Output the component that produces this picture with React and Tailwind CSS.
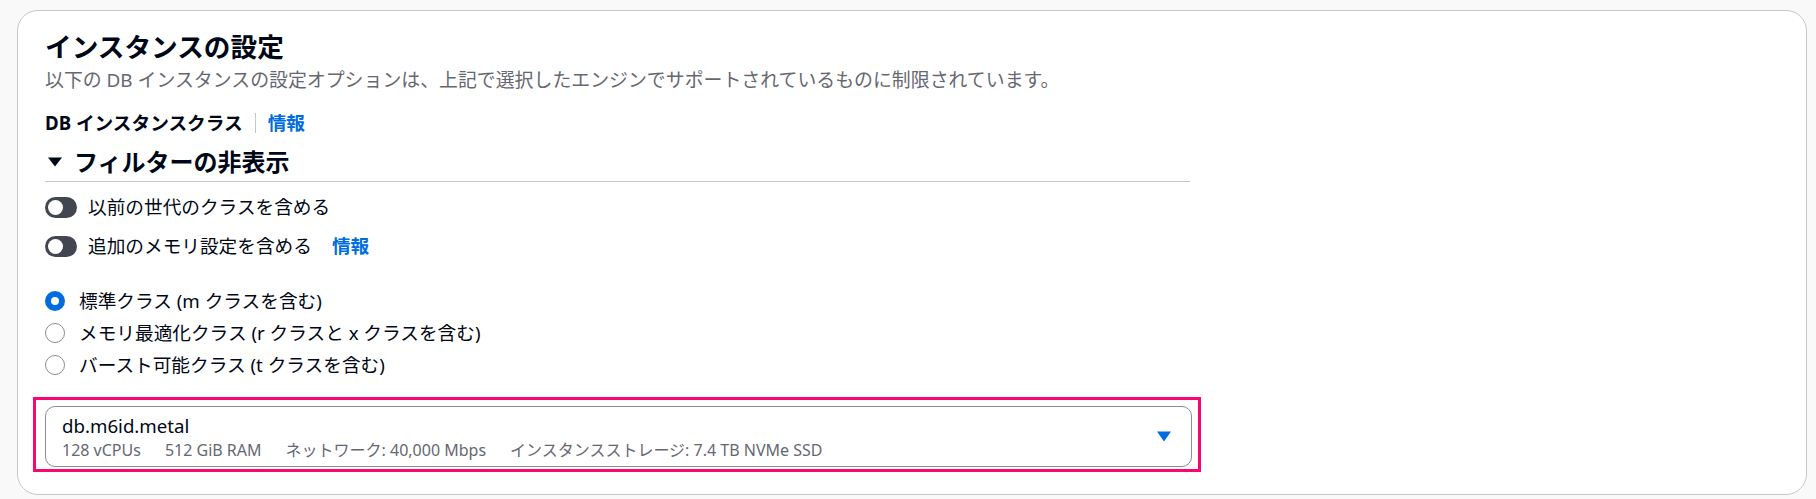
export default function App() {
  const Toggle = () => (
    <div className="w-[32px] h-[21px] rounded-full bg-[#424650] flex items-center px-[3px] shrink-0">
      <div className="w-[15px] h-[15px] rounded-full bg-white" />
    </div>
  );
  const Radio = ({ checked }) =>
    checked ? (
      <div className="w-[20px] h-[20px] rounded-full bg-[#006ce0] flex items-center justify-center shrink-0">
        <div className="w-[8px] h-[8px] rounded-full bg-white" />
      </div>
    ) : (
      <div className="w-[20px] h-[20px] rounded-full border-[1.5px] border-[#8c8c94] bg-white shrink-0" />
    );

  return (
    <div className="w-[1816px] h-[499px] bg-[#f9f9f9] pt-[10px] pl-[17px] font-['Noto_Sans','Noto_Sans_CJK_JP',sans-serif] text-[#000716]">
      <div className="w-[1790px] h-[485px] bg-white border border-[#c6c6cd] rounded-[21px] pl-[27px] pt-[20px]">
        <div className="w-[1147px]">
          <h2 className="text-[26.67px] leading-[32px] h-[32px] font-bold">インスタンスの設定</h2>
          <p className="mt-[4px] text-[18.9px] leading-[26px] text-[#656871]">
            以下の DB インスタンスの設定オプションは、上記で選択したエンジンでサポートされているものに制限されています。
          </p>
          <div className="mt-[17px] h-[26px] flex items-center text-[18.67px]">
            <span className="font-bold">DB インスタンスクラス</span>
            <span className="mx-[12px] h-[20px] border-l border-[#c6c6cd]" />
            <span className="font-bold text-[#006ce0]">情報</span>
          </div>
          <div className="mt-[11px] h-[30px] flex items-center">
            <svg width="14" height="10" viewBox="0 0 14 10" className="ml-[3px] shrink-0">
              <polygon points="0,0.5 14,0.5 7,9.5" fill="#000716" />
            </svg>
            <span className="ml-[12px] text-[24px] leading-[30px] font-bold">フィルターの非表示</span>
          </div>
          <div className="mt-[4px] h-[1px] w-[1145px] bg-[#c6c6cd]" />
          <div className="mt-[12px] h-[26px] flex items-center text-[18.67px]">
            <Toggle />
            <span className="ml-[11px]">以前の世代のクラスを含める</span>
          </div>
          <div className="mt-[13px] h-[26px] flex items-center text-[18.67px]">
            <Toggle />
            <span className="ml-[11px]">追加のメモリ設定を含める</span>
            <span className="ml-[20px] font-bold text-[#006ce0]">情報</span>
          </div>
          <div className="mt-[26px] flex flex-col text-[18.67px]">
            <div className="h-[32px] flex items-center">
              <Radio checked />
              <span className="ml-[14px]">標準クラス (m クラスを含む)</span>
            </div>
            <div className="h-[32px] flex items-center">
              <Radio />
              <span className="ml-[14px]">メモリ最適化クラス (r クラスと x クラスを含む)</span>
            </div>
            <div className="h-[32px] flex items-center">
              <Radio />
              <span className="ml-[14px]">バースト可能クラス (t クラスを含む)</span>
            </div>
          </div>
          <div className="relative mt-[25px]">
            <div className="h-[61px] border border-[#8c8c94] rounded-[10px] flex items-center justify-between pl-[16px] pr-[20px]">
              <div className="flex flex-col">
                <span className="text-[18.67px] leading-[24px]">db.m6id.metal</span>
                <div className="mt-[2px] text-[16px] leading-[20px] text-[#656871] flex gap-[24px]">
                  <span>128 vCPUs</span>
                  <span>512 GiB RAM</span>
                  <span>ネットワーク: 40,000 Mbps</span>
                  <span>インスタンスストレージ: 7.4 TB NVMe SSD</span>
                </div>
              </div>
              <svg width="14" height="11" viewBox="0 0 14 11" className="shrink-0">
                <polygon points="0,0.5 14,0.5 7,10.5" fill="#006ce0" />
              </svg>
            </div>
            <div className="absolute left-[-12px] top-[-9px] w-[1168px] h-[75px] border-[3px] border-[#fa0670] pointer-events-none" />
          </div>
        </div>
      </div>
    </div>
  );
}
